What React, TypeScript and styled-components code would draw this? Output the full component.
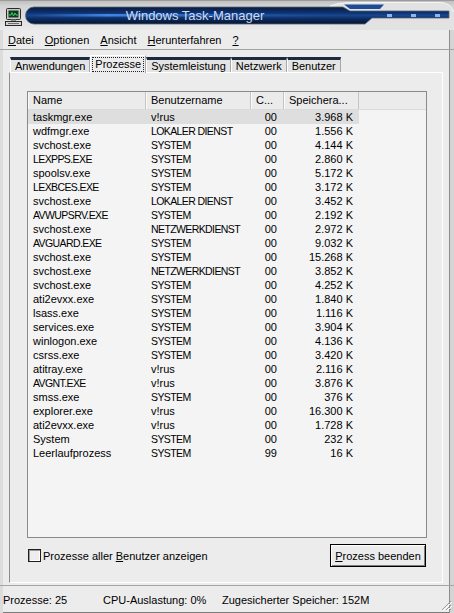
import styled, { createGlobalStyle } from "styled-components";

const GlobalStyle = createGlobalStyle`
  html, body {
    margin: 0;
    padding: 0;
    background: #ececec;
  }
  * { box-sizing: border-box; }
  body {
    font-family: "Liberation Sans", Arial, sans-serif;
    font-size: 11px;
    color: #000;
  }
`;

const Window = styled.div`
  width: 454px;
  height: 613px;
  display: flex;
  flex-direction: column;
  background: #ececec;
  overflow: hidden;
`;

const TitleBar = styled.div`
  display: grid;
  height: 30px;
  flex: none;
  & > * {
    grid-area: 1 / 1;
  }
`;

const TitleText = styled.div`
  margin-left: 25px;
  width: 340px;
  height: 30px;
  line-height: 31px;
  text-align: center;
  font-size: 13px;
  color: #cddbec;
`;

const Frame = styled.div`
  flex: 1;
  display: flex;
  flex-direction: column;
  box-shadow: inset 3px 0 0 #dcdcdc, inset -4px 0 0 #d4d4d4,
    inset -5px 0 0 #8c8c8c, inset 0 -1px 0 #7c7c7c;
`;

const MenuBar = styled.div`
  height: 20px;
  display: flex;
  align-items: center;
  gap: 11px;
  padding-left: 8px;
  border-bottom: 1px solid #a2a2a2;
`;

const MenuItem = styled.span`
  line-height: 14px;
`;

const Accel = styled.span`
  text-decoration: underline;
`;

const Content = styled.div`
  flex: 1;
  display: flex;
  flex-direction: column;
  padding: 5px 11px 2px 9px;
`;

const Tabs = styled.div`
  height: 18px;
  display: flex;
  align-items: flex-end;
  padding-left: 1px;
  margin-bottom: -1px;
`;

const Tab = styled.div<{ $active?: boolean }>`
  display: flex;
  align-items: center;
  white-space: nowrap;
  border-left: 1px solid #fff;
  border-right: 1px solid #a8a8a8;
  ${(p) =>
    p.$active
      ? `
    position: relative;
    z-index: 1;
    height: 18px;
    padding: 0 1px;
    background: #ececec;
    border-top: 1px solid #fff;
  `
      : `
    height: 15px;
    margin-bottom: 1px;
    padding: 0 4px;
    background: #e4e4e4;
    border-top: 3px solid #1c2b3f;
    line-height: 12px;
  `}
`;

const Focus = styled.span`
  border: 1px dotted #222;
  padding: 0 2px;
  line-height: 13px;
`;

const Panel = styled.div`
  flex: 1;
  display: flex;
  flex-direction: column;
  border: 1px solid;
  border-color: #fff #fff #fff #8c8c8c;
  padding: 18px 15px 15px 17px;
`;

const ListView = styled.div`
  flex: 1;
  display: flex;
  flex-direction: column;
  border: 1px solid #8a8a8a;
  background: #f4f4f4;
`;

const Header = styled.div`
  height: 18px;
  display: flex;
  background: #ebebeb;
  border-bottom: 1px solid #dadada;
`;

const HeadCell = styled.div<{ $w: number }>`
  width: ${(p) => p.$w}px;
  padding-left: 5px;
  line-height: 17px;
  white-space: nowrap;
  border-right: 1px solid #c4c4c4;
  box-shadow: inset 1px 0 0 #fafafa;
`;

const Row = styled.div<{ $selected?: boolean }>`
  width: 331px;
  height: 14px;
  display: grid;
  grid-template-columns: 118px 105px 33px 75px;
  line-height: 14px;
  background: ${(p) => (p.$selected ? "#dedede" : "transparent")};
`;

const Cell = styled.div<{ $right?: number; $caps?: boolean }>`
  white-space: nowrap;
  overflow: hidden;
  padding-left: ${(p) => (p.$right ? 0 : 5)}px;
  padding-right: ${(p) => p.$right ?? 0}px;
  text-align: ${(p) => (p.$right ? "right" : "left")};
  font-size: ${(p) => (p.$caps ? "10.5px" : "11px")};
  letter-spacing: ${(p) => (p.$caps ? "-0.6px" : "0")};
`;

const Footer = styled.div`
  height: 23px;
  margin-top: 6px;
  display: flex;
  align-items: center;
  justify-content: space-between;
  padding: 0 1px;
`;

const CheckLabel = styled.label`
  display: flex;
  align-items: center;
  gap: 2px;
`;

const Box = styled.span`
  width: 13px;
  height: 13px;
  border: 1px solid #1e1e1e;
  background: #ededed;
  box-shadow: inset 1px 1px 0 #9a9a9a, inset -1px -1px 0 #fff;
`;

const Button = styled.button`
  width: 96px;
  height: 23px;
  font: inherit;
  color: #000;
  background: #ececec;
  border: 1px solid #000;
  box-shadow: inset 1px 1px 0 #fff, inset -1px -1px 0 #7e7e7e;
  padding: 0;
`;

const StatusBar = styled.div`
  height: 28px;
  display: flex;
  align-items: center;
  padding: 0 2px 0 3px;
  border-top: 1px solid #a4a4a4;
`;

const Pane = styled.div<{ $w?: number }>`
  width: ${(p) => (p.$w ? `${p.$w}px` : "auto")};
  flex: ${(p) => (p.$w ? "none" : 1)};
  white-space: nowrap;
`;

const Grip = styled.svg`
  align-self: flex-end;
  margin-bottom: 2px;
`;

const rows: [string, string, string, string][] = [
  ["taskmgr.exe", "v!rus", "00", "3.968 K"],
  ["wdfmgr.exe", "LOKALER DIENST", "00", "1.556 K"],
  ["svchost.exe", "SYSTEM", "00", "4.144 K"],
  ["LEXPPS.EXE", "SYSTEM", "00", "2.860 K"],
  ["spoolsv.exe", "SYSTEM", "00", "5.172 K"],
  ["LEXBCES.EXE", "SYSTEM", "00", "3.172 K"],
  ["svchost.exe", "LOKALER DIENST", "00", "3.452 K"],
  ["AVWUPSRV.EXE", "SYSTEM", "00", "2.192 K"],
  ["svchost.exe", "NETZWERKDIENST", "00", "2.972 K"],
  ["AVGUARD.EXE", "SYSTEM", "00", "9.032 K"],
  ["svchost.exe", "SYSTEM", "00", "15.268 K"],
  ["svchost.exe", "NETZWERKDIENST", "00", "3.852 K"],
  ["svchost.exe", "SYSTEM", "00", "4.252 K"],
  ["ati2evxx.exe", "SYSTEM", "00", "1.840 K"],
  ["lsass.exe", "SYSTEM", "00", "1.116 K"],
  ["services.exe", "SYSTEM", "00", "3.904 K"],
  ["winlogon.exe", "SYSTEM", "00", "4.136 K"],
  ["csrss.exe", "SYSTEM", "00", "3.420 K"],
  ["atitray.exe", "v!rus", "00", "2.116 K"],
  ["AVGNT.EXE", "v!rus", "00", "3.876 K"],
  ["smss.exe", "SYSTEM", "00", "376 K"],
  ["explorer.exe", "v!rus", "00", "16.300 K"],
  ["ati2evxx.exe", "v!rus", "00", "1.728 K"],
  ["System", "SYSTEM", "00", "232 K"],
  ["Leerlaufprozess", "SYSTEM", "99", "16 K"],
];

// Tahoma's capitals are narrower than Arial's, so all-caps names get squeezed a bit
const isCaps = (s: string) => s === s.toUpperCase();

const TitleChrome = () => (
  <svg width="454" height="30" viewBox="0 0 454 30">
    <defs>
      <linearGradient id="frame" x1="0" y1="0" x2="0" y2="1">
        <stop offset="0" stopColor="#bcbcbc" />
        <stop offset="0.2" stopColor="#d4d4d4" />
        <stop offset="0.7" stopColor="#e0e0e0" />
        <stop offset="1" stopColor="#eaeaea" />
      </linearGradient>
      <linearGradient id="cap" gradientUnits="userSpaceOnUse" x1="0" y1="7" x2="0" y2="24">
        <stop offset="0" stopColor="#0a1b3a" />
        <stop offset="0.3" stopColor="#0d2e6a" />
        <stop offset="0.5" stopColor="#17468f" />
        <stop offset="0.7" stopColor="#0c2b60" />
        <stop offset="1" stopColor="#06132c" />
      </linearGradient>
      <linearGradient id="streak" x1="0" y1="0" x2="1" y2="0">
        <stop offset="0" stopColor="#3a7ee0" stopOpacity="0" />
        <stop offset="0.25" stopColor="#4a8ef0" stopOpacity="0.9" />
        <stop offset="0.7" stopColor="#2a62c0" stopOpacity="0.5" />
        <stop offset="1" stopColor="#2a62c0" stopOpacity="0" />
      </linearGradient>
    </defs>
    <rect x="0" y="0" width="454" height="30" fill="url(#frame)" />
    <path d="M0 0.5 H454" stroke="#9c9c9c" />
    <path
      d="M330 6 Q338 2.5 350 2.5 H440 Q451 2.5 453.5 12 V30 H330 Z"
      fill="#e2e2e2"
    />
    <path d="M330 6 Q338 2.5 350 2.5 H440 Q451 2.5 453.5 12" fill="none" stroke="#f6f6f6" />
    <path
      d="M34 7 H343 L350 11 H449 V18 H372 L365 24 H34 A8.5 8.5 0 0 1 34 7 Z"
      fill="url(#cap)"
      stroke="#56667c"
      strokeWidth="0.8"
    />
    <rect x="32" y="14" width="300" height="2.5" fill="url(#streak)" />
    <path d="M344 4.5 H384 L380 9 H350 Z" fill="#1d4c96" />
    <rect x="387" y="14" width="5" height="3" fill="#8db6e6" />
    <rect x="411" y="14" width="5" height="3" fill="#8db6e6" />
    <rect x="435" y="14" width="5" height="3" fill="#8db6e6" />
    <rect x="6.5" y="8.5" width="14" height="11" rx="1" fill="#c9c9c9" stroke="#2a2a2a" />
    <rect x="8.5" y="10.5" width="10" height="7" fill="#10391f" />
    <polyline
      points="9,15 11,15 12,12.5 13.5,16 15,13 16,15 18,15"
      fill="none"
      stroke="#3fe066"
      strokeWidth="0.9"
    />
    <rect x="11" y="19.5" width="5" height="2" fill="#8a8a8a" />
    <rect x="5.5" y="21.5" width="16" height="4" fill="#d2d2d2" stroke="#2a2a2a" />
    <path d="M8 23.5 H19" stroke="#555" strokeWidth="0.8" />
  </svg>
);

export default function App() {
  return (
    <>
      <GlobalStyle />
      <Window>
        <TitleBar>
          <TitleChrome />
          <TitleText>Windows Task-Manager</TitleText>
        </TitleBar>
        <Frame>
          <MenuBar>
            <MenuItem><Accel>D</Accel>atei</MenuItem>
            <MenuItem><Accel>O</Accel>ptionen</MenuItem>
            <MenuItem><Accel>A</Accel>nsicht</MenuItem>
            <MenuItem><Accel>H</Accel>erunterfahren</MenuItem>
            <MenuItem><Accel>?</Accel></MenuItem>
          </MenuBar>
          <Content>
            <Tabs>
              <Tab>Anwendungen</Tab>
              <Tab $active>
                <Focus>Prozesse</Focus>
              </Tab>
              <Tab>Systemleistung</Tab>
              <Tab>Netzwerk</Tab>
              <Tab>Benutzer</Tab>
            </Tabs>
            <Panel>
              <ListView>
                <Header>
                  <HeadCell $w={118}>Name</HeadCell>
                  <HeadCell $w={105}>Benutzername</HeadCell>
                  <HeadCell $w={33}>C...</HeadCell>
                  <HeadCell $w={75}>Speichera...</HeadCell>
                </Header>
                {rows.map(([name, user, cpu, mem], i) => (
                  <Row key={i} $selected={i === 0}>
                    <Cell $caps={isCaps(name)}>{name}</Cell>
                    <Cell $caps={isCaps(user)}>{user}</Cell>
                    <Cell $right={7}>{cpu}</Cell>
                    <Cell $right={6}>{mem}</Cell>
                  </Row>
                ))}
              </ListView>
              <Footer>
                <CheckLabel>
                  <Box />
                  <span>
                    Prozesse aller <Accel>B</Accel>enutzer anzeigen
                  </span>
                </CheckLabel>
                <Button>
                  <Accel>P</Accel>rozess beenden
                </Button>
              </Footer>
            </Panel>
          </Content>
          <StatusBar>
            <Pane $w={100}>Prozesse: 25</Pane>
            <Pane $w={119}>CPU-Auslastung: 0%</Pane>
            <Pane>Zugesicherter Speicher: 152M</Pane>
            <Grip width="12" height="12" viewBox="0 0 12 12">
              <path d="M11 2 L2 11 M11 6 L6 11 M11 10 L10 11" stroke="#9a9a9a" strokeWidth="1" />
              <path d="M12 3 L3 12 M12 7 L7 12" stroke="#fff" strokeWidth="1" />
            </Grip>
          </StatusBar>
        </Frame>
      </Window>
    </>
  );
}
